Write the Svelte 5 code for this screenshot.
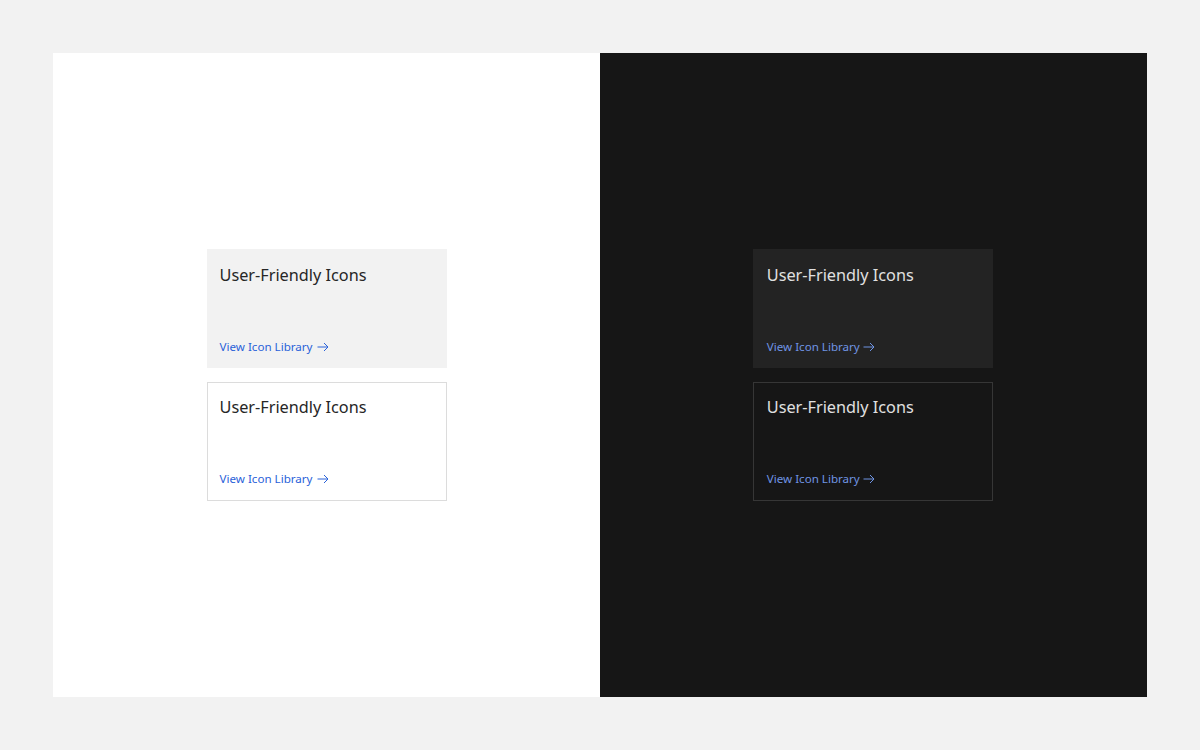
<script lang="ts">
  const themes = ["light", "dark"];
  const variants = ["filled", "outlined"];
</script>

<main class="page">
  <div class="frame">
    {#each themes as theme}
      <section class="panel {theme}">
        <div class="stack">
          {#each variants as variant}
            <a class="tile {variant}" href="#top">
              <h3 class="title">User-Friendly Icons</h3>
              <span class="link">
                View Icon Library
                <svg class="arrow" viewBox="0 0 12 12" width="12" height="12" aria-hidden="true">
                  <path d="M0.5 6H11M7 2l4 4-4 4" />
                </svg>
              </span>
            </a>
          {/each}
        </div>
      </section>
    {/each}
  </div>
</main>

<style>
  :global(body) {
    margin: 0;
    background: #f2f2f2;
  }

  .page {
    height: 750px;
    box-sizing: border-box;
    padding: 53px;
    font-family: "Noto Sans", "Liberation Sans", sans-serif;
  }

  .frame {
    display: grid;
    grid-template-columns: 1fr 1fr;
    height: 100%;
  }

  .panel {
    display: flex;
    align-items: center;
    justify-content: center;
  }

  .light {
    --bg: #fff;
    --tile: #f2f2f2;
    --line: #dcdcdc;
    --text: #262626;
    --link: #2a62d9;
    background: var(--bg);
  }

  .dark {
    --bg: #161616;
    --tile: #232323;
    --line: #363636;
    --text: #e0e0e0;
    --link: #6f94e3;
    background: var(--bg);
  }

  .dark .stack {
    margin-right: 1px;
  }

  .dark .title,
  .dark .link {
    margin-left: 0.75px;
  }

  .dark .arrow {
    margin-left: -0.75px;
  }

  .stack {
    display: flex;
    flex-direction: column;
    gap: 14px;
    width: 240px;
  }

  .tile {
    display: flex;
    flex-direction: column;
    justify-content: space-between;
    height: 119px;
    box-sizing: border-box;
    padding: 14px 13px 13px;
    text-decoration: none;
  }

  .filled {
    background: var(--tile);
  }

  .outlined {
    border: 1px solid var(--line);
    padding: 12px 12px 13px;
  }

  .title {
    margin: 0;
    font-size: 16.25px;
    font-weight: 400;
    line-height: 24px;
    color: var(--text);
  }

  .link {
    display: flex;
    align-items: center;
    gap: 4px;
    font-size: 11.6px;
    line-height: 16px;
    color: var(--link);
  }

  .arrow {
    fill: none;
    stroke: currentColor;
    stroke-width: 1;
  }
</style>
